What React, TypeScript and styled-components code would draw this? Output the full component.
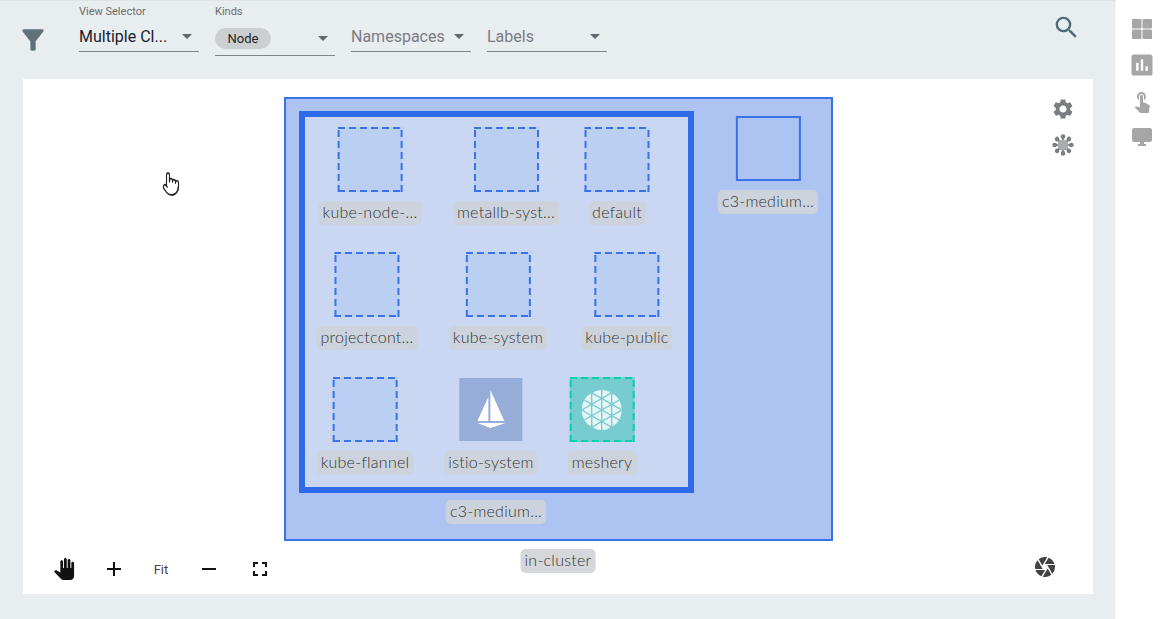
import styled, { createGlobalStyle } from 'styled-components'
import {
  MdAdd,
  MdArrowDropDown,
  MdAssessment,
  MdCamera,
  MdDesktopWindows,
  MdFilterAlt,
  MdFullscreen,
  MdPanTool,
  MdRemove,
  MdSearch,
  MdSettings,
  MdTouchApp,
} from 'react-icons/md'
import { LuPointer } from 'react-icons/lu'

const GlobalStyle = createGlobalStyle`
  html, body {
    margin: 0;
    padding: 0;
    background: #fff;
    overflow: hidden;
  }
  * {
    box-sizing: border-box;
  }
`

const Page = styled.div`
  display: flex;
  width: 1167px;
  height: 619px;
  font-family: Roboto, "Liberation Sans", sans-serif;
`

const Main = styled.div`
  width: 1115px;
  height: 100%;
  background: #e8edf0;
  border-top: 1px solid #dfe3e6;
  display: flex;
  flex-direction: column;
`

const Toolbar = styled.div`
  height: 78px;
  display: flex;
  align-items: flex-start;
  padding: 4px 0 0 22px;
`

const FilterIcon = styled.div`
  width: 22px;
  margin: 19px 35px 0 0;
  color: #607078;
  font-size: 32px;
  line-height: 0;
  display: flex;
  justify-content: center;
  svg {
    flex: none;
  }
`

const Selects = styled.div`
  display: flex;
  gap: 16px;
`

const Field = styled.div<{ $bare?: boolean }>`
  width: 120px;
  margin-top: ${(p) => (p.$bare ? '19px' : '0')};
`

const FieldLabel = styled.div`
  height: 14px;
  font-size: 11px;
  line-height: 13px;
  color: #6c6c6c;
  margin-bottom: 5px;
`

const SelectBox = styled.div<{ $tall?: boolean }>`
  height: ${(p) => (p.$tall ? '32px' : '28px')};
  display: flex;
  align-items: center;
  justify-content: space-between;
  border-bottom: 1px solid #7c868c;
  padding-bottom: 3px;
`

const SelectValue = styled.span<{ $muted?: boolean }>`
  font-size: 16px;
  color: ${(p) => (p.$muted ? '#7b7b83' : '#1c1c2c')};
`

const Chip = styled.span`
  height: 21px;
  width: 56px;
  border-radius: 11px;
  background: #cbcfd1;
  color: #222;
  font-size: 13px;
  display: flex;
  align-items: center;
  justify-content: center;
`

const Arrow = styled(MdArrowDropDown)`
  color: #5f6a70;
  font-size: 24px;
`

const SearchButton = styled.div`
  margin: 8px 0 0 auto;
  padding-right: 34px;
  color: #4d6c7c;
  font-size: 29px;
  line-height: 0;
`

const Canvas = styled.div`
  position: relative;
  margin-left: 23px;
  width: 1070px;
  height: 515px;
  background: #fff;
  overflow: hidden;
`

const Cluster = styled.div`
  position: absolute;
  left: 261px;
  top: 18px;
  width: 549px;
  height: 444px;
  background: #adc4f2;
  border: 2px solid #3a72e8;
`

const InnerNode = styled.div`
  position: absolute;
  left: 276px;
  top: 32px;
  width: 395px;
  height: 382px;
  background: #c9d7f2;
  border: 6px solid #2f6be8;
`

const Node = styled.div<{ $cx: number; $y: number }>`
  position: absolute;
  left: ${(p) => p.$cx - 23}px;
  top: ${(p) => p.$y - 79}px;
  transform: translateX(-50%);
  display: flex;
  flex-direction: column;
  align-items: center;
`

// chrome's dashed border has short dashes, the reference has long ones
const dashes = (c: string) => `
  background-image:
    repeating-linear-gradient(90deg, ${c} 0 7px, transparent 7px 11px),
    repeating-linear-gradient(90deg, ${c} 0 7px, transparent 7px 11px),
    repeating-linear-gradient(0deg, ${c} 0 7px, transparent 7px 11px),
    repeating-linear-gradient(0deg, ${c} 0 7px, transparent 7px 11px);
  background-size: 100% 2px, 100% 2px, 2px 100%, 2px 100%;
  background-position: 0 0, 0 100%, 0 0, 100% 0;
  background-repeat: no-repeat;
`

const NodeBox = styled.div`
  width: 65px;
  height: 65px;
  display: flex;
  align-items: center;
  justify-content: center;
  background-color: #bbcff2;
  ${dashes('#3a72e8')}
`

const SolidBox = styled(NodeBox)`
  background-image: none;
  background-color: #adc4f2;
  border: 2px solid #3a72e8;
`

const IstioBox = styled(NodeBox)`
  width: 63px;
  height: 63px;
  margin: 1px;
  background-image: none;
  background-color: #96acd9;
`

const MesheryBox = styled(NodeBox)`
  background-color: #77ccd0;
  ${dashes('#00d3a9')}
`

const NodeLabel = styled.div<{ $onWhite?: boolean }>`
  margin-top: 9px;
  height: 24px;
  padding: 0 4px;
  border-radius: 5px;
  background: ${(p) => (p.$onWhite ? '#d5d7da' : '#cdd3dc')};
  color: #333;
  font-family: Lato, "Liberation Sans", sans-serif;
  font-weight: 300;
  font-size: 16px;
  letter-spacing: 0.25px;
  line-height: 22px;
  white-space: nowrap;
`

const FreeLabel = styled(NodeLabel)<{ $cx: number; $y: number }>`
  position: absolute;
  margin: 0;
  left: ${(p) => p.$cx - 23}px;
  top: ${(p) => p.$y - 79}px;
  transform: translateX(-50%);
`

const SideTools = styled.div`
  position: absolute;
  top: 18px;
  left: 1028px;
  display: flex;
  flex-direction: column;
  gap: 12px;
  color: #7b7d80;
  font-size: 24px;
  line-height: 0;
`

const ZoomBar = styled.div`
  position: absolute;
  left: 17px;
  top: 472px;
  display: flex;
  align-items: center;
  height: 36px;
`

const ZoomButton = styled.div<{ $w: number; $size?: number }>`
  width: ${(p) => p.$w}px;
  display: flex;
  justify-content: center;
  color: #111;
  font-size: ${(p) => p.$size ?? 24}px;
`

const FitText = styled.span`
  font-size: 13px;
  color: #444;
`

const Snapshot = styled.div`
  position: absolute;
  left: 1010px;
  top: 476px;
  color: #424242;
  font-size: 24px;
  line-height: 0;
`

const Pointer = styled(LuPointer)`
  position: absolute;
  left: 139px;
  top: 92px;
  color: #222;
  width: 18px;
  height: 26px;
  stroke-width: 1.5;
`

const Sidebar = styled.div`
  flex: 1;
  display: flex;
  flex-direction: column;
  padding-top: 11px;
  color: #a6a6a6;
  border-left: 1px solid #f0f2f3;
`

const SideItem = styled.div<{ $size: number }>`
  height: 36px;
  display: flex;
  align-items: center;
  justify-content: center;
  font-size: ${(p) => p.$size}px;
  line-height: 0;
`

const GridIcon = () => (
  <svg width="24" height="24" viewBox="0 0 24 24" fill="currentColor">
    <rect x="2" y="2" width="9.5" height="9.5" rx="1" />
    <rect x="12.5" y="2" width="9.5" height="9.5" rx="1" />
    <rect x="2" y="12.5" width="9.5" height="9.5" rx="1" />
    <rect x="12.5" y="12.5" width="9.5" height="9.5" rx="1" />
  </svg>
)

const BubbleIcon = () => (
  <svg width="24" height="24" viewBox="0 0 24 24" fill="currentColor">
    {[0, 45, 90, 135, 180, 225, 270, 315].map((a) => (
      <g key={a} transform={`rotate(${a} 12 12)`}>
        <rect x="11" y="4" width="2" height="4" />
        <circle cx="12" cy="3.6" r="2.3" />
      </g>
    ))}
    <circle cx="12" cy="12" r="5.5" fill="#a9abae" />
  </svg>
)

const IstioIcon = () => (
  <svg width="28" height="39" viewBox="0 0 28 39" fill="#fff">
    <path d="M11 7 L11 31 L0 31 Z" />
    <path d="M13 0 L27 31 L13 31 Z" />
    <path d="M0 33 H28 L13 38 Z" />
  </svg>
)

const MesheryIcon = () => (
  <svg width="40" height="40" viewBox="0 0 40 40">
    <defs>
      <clipPath id="mesh-clip">
        <circle cx="20" cy="20" r="20" />
      </clipPath>
    </defs>
    <circle cx="20" cy="20" r="20" fill="#e6f6f7" />
    <g stroke="#77ccd0" strokeWidth="1.4" fill="none" clipPath="url(#mesh-clip)">
      <path d="M10 0 V40 M20 0 V40 M30 0 V40" />
      {[-34, -23, -11.5, 0, 11.5, 23, 34].map((k) => (
        <path key={k} d={`M0 ${8.5 + k} L40 ${31.5 + k} M0 ${31.5 + k} L40 ${8.5 + k}`} />
      ))}
    </g>
  </svg>
)

const nodes = [
  { name: 'kube-node-...', cx: 370, y: 127 },
  { name: 'metallb-syst...', cx: 506, y: 127 },
  { name: 'default', cx: 617, y: 127 },
  { name: 'projectcont...', cx: 367, y: 252 },
  { name: 'kube-system', cx: 498, y: 252 },
  { name: 'kube-public', cx: 627, y: 252 },
  { name: 'kube-flannel', cx: 365, y: 377 },
]

const selects = [
  { name: 'Namespaces' },
  { name: 'Labels' },
]

const App = () => {
  return (
    <Page>
      <GlobalStyle />
      <Main>
        <Toolbar>
          <FilterIcon>
            <MdFilterAlt />
          </FilterIcon>
          <Selects>
            <Field>
              <FieldLabel>View Selector</FieldLabel>
              <SelectBox>
                <SelectValue>Multiple Cl...</SelectValue>
                <Arrow />
              </SelectBox>
            </Field>
            <Field>
              <FieldLabel>Kinds</FieldLabel>
              <SelectBox $tall>
                <Chip>Node</Chip>
                <Arrow />
              </SelectBox>
            </Field>
            {selects.map((s) => (
              <Field $bare key={s.name}>
                <SelectBox>
                  <SelectValue $muted>{s.name}</SelectValue>
                  <Arrow />
                </SelectBox>
              </Field>
            ))}
          </Selects>
          <SearchButton>
            <MdSearch />
          </SearchButton>
        </Toolbar>
        <Canvas>
          <Cluster />
          <InnerNode />
          {nodes.map((n) => (
            <Node key={n.name} $cx={n.cx} $y={n.y}>
              <NodeBox />
              <NodeLabel>{n.name}</NodeLabel>
            </Node>
          ))}
          <Node $cx={491} $y={377}>
            <IstioBox>
              <IstioIcon />
            </IstioBox>
            <NodeLabel>istio-system</NodeLabel>
          </Node>
          <Node $cx={602} $y={377}>
            <MesheryBox>
              <MesheryIcon />
            </MesheryBox>
            <NodeLabel>meshery</NodeLabel>
          </Node>
          <Node $cx={768} $y={116}>
            <SolidBox />
            <NodeLabel>c3-medium...</NodeLabel>
          </Node>
          <FreeLabel $cx={496} $y={500}>c3-medium...</FreeLabel>
          <FreeLabel $onWhite $cx={558} $y={549}>in-cluster</FreeLabel>
          <SideTools>
            <MdSettings />
            <BubbleIcon />
          </SideTools>
          <ZoomBar>
            <ZoomButton $w={48} $size={22}>
              <MdPanTool />
            </ZoomButton>
            <ZoomButton $w={52}>
              <MdAdd />
            </ZoomButton>
            <ZoomButton $w={42}>
              <FitText>Fit</FitText>
            </ZoomButton>
            <ZoomButton $w={54}>
              <MdRemove />
            </ZoomButton>
            <ZoomButton $w={48}>
              <MdFullscreen />
            </ZoomButton>
          </ZoomBar>
          <Snapshot>
            <MdCamera />
          </Snapshot>
          <Pointer preserveAspectRatio="none" />
        </Canvas>
      </Main>
      <Sidebar>
        <SideItem $size={24}>
          <GridIcon />
        </SideItem>
        <SideItem $size={28}>
          <MdAssessment />
        </SideItem>
        <SideItem $size={24}>
          <MdTouchApp />
        </SideItem>
        <SideItem $size={24}>
          <MdDesktopWindows />
        </SideItem>
      </Sidebar>
    </Page>
  )
}

export default App
